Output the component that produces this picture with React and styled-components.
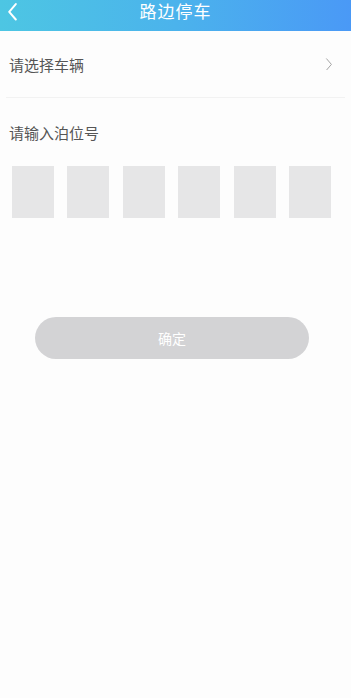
import React, { useState } from 'react';
import styled, { createGlobalStyle } from 'styled-components';

const GlobalStyle = createGlobalStyle`
  html, body {
    margin: 0;
    padding: 0;
    background: #fdfdfd;
  }
  body {
    font-family: "Noto Sans CJK SC", "Noto Sans", sans-serif;
  }
`;

const Page = styled.div`
  width: 351px;
  min-height: 698px;
  background: #fdfdfd;
`;

const Header = styled.div`
  height: 31px;
  box-sizing: border-box;
  padding-top: 1px;
  display: flex;
  align-items: flex-start;
  justify-content: center;
  position: relative;
  background: linear-gradient(90deg, #4dc6e3 0%, #4bb3ec 50%, #4a99f6 100%);
`;

const BackButton = styled.button`
  position: absolute;
  left: 3px;
  top: 2px;
  width: 18px;
  height: 20px;
  padding: 0;
  border: none;
  background: none;
  display: flex;
  align-items: center;
  justify-content: center;
`;

const Title = styled.h1`
  margin: 0;
  font-size: 17px;
  line-height: 20px;
  font-weight: 400;
  color: #fff;
  letter-spacing: 1px;
`;

const Section = styled.div`
  padding: 0 6px;
`;

const SelectRow = styled.div`
  height: 66px;
  display: flex;
  align-items: center;
  justify-content: space-between;
  padding: 0 12px 0 3px;
  border-bottom: 1px solid #f2f2f2;
`;

const Label = styled.span`
  font-size: 15px;
  color: #555;
`;

const PlateLabel = styled(Label)`
  display: block;
  padding: 24px 0 0 9px;
`;

const Boxes = styled.div`
  width: 319px;
  display: flex;
  justify-content: space-between;
  padding: 23px 0 0 12px;
`;

const Box = styled.input`
  width: 42px;
  height: 52px;
  box-sizing: border-box;
  border: none;
  background: #e6e6e7;
  text-align: center;
  font-size: 20px;
  outline: none;
  padding: 0;
`;

const Confirm = styled.button`
  display: block;
  margin: 99px 0 0 35px;
  width: 274px;
  height: 42px;
  border: none;
  border-radius: 21px;
  background: ${({ $active }) => ($active ? '#4aa6f2' : '#d3d3d5')};
  color: #fff;
  font-size: 14px;
  font-family: inherit;
`;

const Chevron = ({ dir = 'right', color, size }) => (
  <svg width={size} height={size * 1.6} viewBox="0 0 10 16" fill="none">
    <path
      d={dir === 'left' ? 'M8 1 L2 8 L8 15' : 'M2 1 L8 8 L2 15'}
      stroke={color}
      strokeWidth={dir === 'left' ? 1.8 : 1.2}
      strokeLinecap="round"
      strokeLinejoin="round"
    />
  </svg>
);

const App = () => {
  const [codes, setCodes] = useState(['', '', '', '', '', '']);

  const update = (i, v) => {
    const next = [...codes];
    next[i] = v.slice(-1);
    setCodes(next);
  };

  return (
    <Page>
      <GlobalStyle />
      <Header>
        <BackButton>
          <Chevron dir="left" color="#fff" size={11} />
        </BackButton>
        <Title>路边停车</Title>
      </Header>
      <Section>
        <SelectRow>
          <Label>请选择车辆</Label>
          <Chevron color="#a0a0a0" size={8} />
        </SelectRow>
      </Section>
      <PlateLabel>请输入泊位号</PlateLabel>
      <Boxes>
        {codes.map((c, i) => (
          <Box key={i} value={c} onChange={(e) => update(i, e.target.value)} />
        ))}
      </Boxes>
      <Confirm $active={codes.every((c) => c)}>确定</Confirm>
    </Page>
  );
};

export default App;
